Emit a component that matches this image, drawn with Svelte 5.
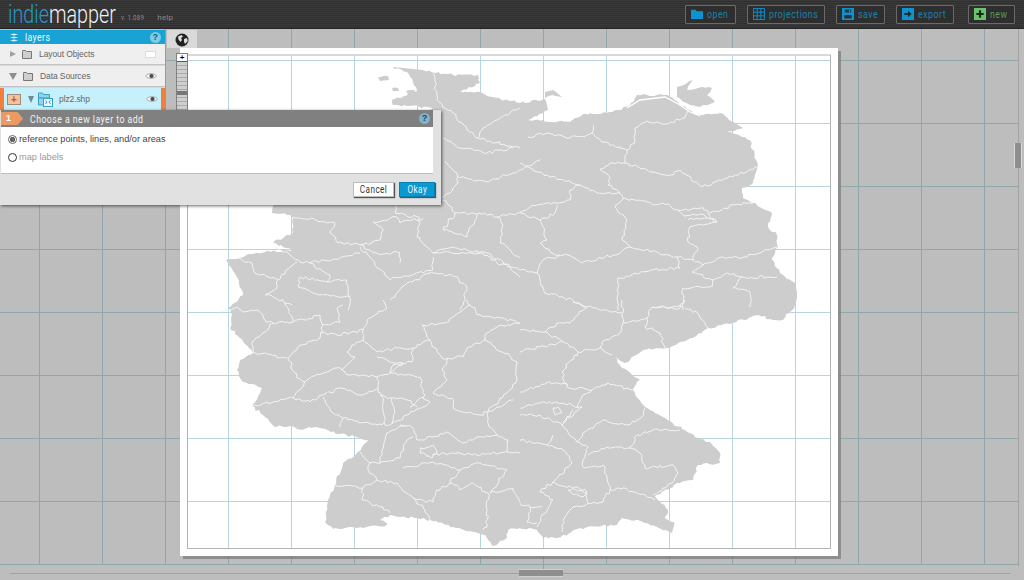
<script>
	const gridX = [39.5, 102.5, 165.5, 228.5, 291.5, 354.5, 417.5, 480.5, 543.5, 606.5, 669.5, 732.5, 795.5, 858.5, 921.5, 984.5];
	const gridY = [60.5, 123.5, 186.5, 249.5, 312.5, 375.5, 438.5, 501.5, 564.5];

	const buttons = [
		{ label: 'open', icon: 'folder', width: 51 },
		{ label: 'projections', icon: 'grid', width: 78 },
		{ label: 'save', icon: 'disk', width: 49 },
		{ label: 'export', icon: 'arrow', width: 58 },
		{ label: 'new', icon: 'plus', width: 47 }
	];

	// germany, traced clockwise from the north frisian coast
	const coast = `393,67 407,72 413,82 417,91 392,100 393,105 410,106 433,108 425,115 300,190 273,206 272,213 290,215 293,218 293,232 273,243 293,250 265,252 226,260 237,277 243,295 228,308 232,315 230,328 240,338 253,353 240,360 237,370 243,382 262,388 252,406 263,415 275,427 292,426 297,429 315,427 340,434 368,440 358,452 343,463 335,485 328,500 325,522 333,529 367,527 390,525 380,520 390,515 400,517 417,518 430,520 453,527 485,535 493,546 507,538 508,530 520,528 537,530 543,538 557,538 580,528 617,525 622,518 643,522 657,527 672,533 674,522 665,518 668,510 655,497 677,483 693,480 698,465 720,463 720,453 710,442 695,437 663,417 645,407 633,390 640,380 622,368 615,357 625,363 643,350 667,348 693,338 708,328 733,323 758,315 773,320 783,320 795,305 797,295 795,283 780,273 772,258 778,247 777,235 768,227 772,213 753,203 743,198 742,188 753,183 758,167 750,140 727,132 743,128 733,122 720,113 700,115 687,109 667,95 637,95 630,105 612,112 582,115 570,122 528,120 548,110 545,99 520,103 492,97 480,92 460,92 480,83 478,75 453,75 423,70`;

	const borders = [
		'528,137 547,133 570,138 592,133 593,125',
		'592,133 602,142 627,150 625,163 653,172 670,175 680,170 702,187 727,178 758,167',
		'627,150 635,140 635,128 647,121 662,124 685,118 688,110',
		'625,163 610,163 600,169 610,177 608,185 620,193',
		'520,163 537,172 550,177 580,185 600,193 620,193',
		'620,193 623,199 640,200 653,205 663,203 678,210 700,208 710,213 733,205 753,203',
		'623,199 615,207 627,220 622,240 630,247 677,257 680,268 653,270 618,278 618,310',
		'630,247 613,255 582,263 568,255 543,260 537,273 545,293 563,297 587,308',
		'580,185 570,190 570,200 557,203 533,205 520,212',
		'557,205 555,213 540,220 547,240 540,243 550,252 560,255',
		'677,257 693,260 698,248 688,242 690,227 717,222 707,213',
		'688,220 707,218 717,222',
		'678,210 684,216 700,214 707,218',
		'693,260 703,265 723,257 747,257 777,247',
		'703,265 692,272 713,280 727,273 742,277 733,288 750,292 750,307',
		'742,277 777,277',
		'713,280 710,287 683,288 683,310',
		'520,270 537,273',
		'433,73 437,100 453,113 467,130 478,138 513,147 520,148',
		'520,108 497,120 483,128 478,138',
		'443,138 460,148 478,150 487,153 513,148',
		'445,162 457,173 458,183 450,193 443,198',
		'458,177 487,182 513,173 520,170 540,160',
		'443,200 447,203 455,213 478,213 497,217 503,225 500,243 520,258',
		'455,213 443,230 467,237 478,213',
		'395,205 395,213 420,218 417,237 433,253 483,253 497,263 520,270',
		'423,218 400,223 397,217 373,222 383,230 380,240 360,245',
		'293,217 330,222 335,223 330,233 338,243 360,245 377,253 400,253 400,263',
		'360,247 370,257 390,280 433,270',
		'275,247 290,255 300,262 310,263 340,258 360,253',
		'237,258 252,263 255,273 278,280 297,262',
		'278,280 277,288 265,295 292,305',
		'310,263 330,275 327,282 300,277 298,287 307,290',
		'327,282 347,280 350,297 348,310',
		'307,290 320,295 350,297',
		'390,300 407,283 433,273 457,277 467,290 460,310',
		'433,270 433,257',
		'520,277 510,267 487,253 453,247 433,253',
		'497,217 520,213 540,220',
		'220,312 237,307 243,312 258,310 265,320 273,323 293,322 288,308 282,300',
		'293,322 320,315 323,325 340,322 337,308 343,305',
		'273,323 263,333 252,342 253,352 287,358',
		'323,325 320,338 300,345 288,358 297,378 305,382',
		'320,333 337,335 363,330 367,320 387,308 383,300',
		'363,330 363,340 377,352 397,348 413,348 430,340 422,325 443,323 453,317 470,305 467,300',
		'363,340 357,342 347,352 355,357 342,370 335,368 307,380 293,398',
		'252,406 293,398 310,402 323,395 340,388 363,395 378,388 377,377 350,375 342,370',
		'377,377 390,372 403,363 393,363 377,357',
		'413,348 412,362 393,365 390,373 420,377 425,395 410,407',
		'430,340 442,358 448,358 442,370 447,380 433,393 452,398 453,408 480,415 488,412 513,400',
		'448,358 463,357 467,348 485,340 517,362 517,380 507,393 488,412',
		'485,340 485,335 497,327 520,323',
		'470,305 480,315 497,317 520,323',
		'488,412 488,423 497,435 477,437 463,443 447,432 433,437 417,440 412,427 400,425',
		'378,388 383,403 385,425 393,423 407,415 423,407 430,402 423,397',
		'340,427 343,418 377,425 385,423',
		'323,397 333,413 343,418',
		'392,398 395,413 392,423',
		'380,395 390,398 407,400 417,407',
		'405,425 387,433 380,463 370,463',
		'360,452 370,463 368,470 377,480 363,488 335,485',
		'377,480 397,483 413,498 433,502 437,490 452,483 460,490 472,483 488,493 487,527 483,530',
		'363,488 362,500 380,507 390,513',
		'413,498 425,510 430,520',
		'380,463 400,458 407,440 413,437',
		'403,468 433,462 447,465 460,470 450,483',
		'420,448 433,445 437,453 432,458 420,453 420,448',
		'432,455 453,453 473,455 507,452 520,453',
		'460,470 480,463 507,470 490,493',
		'507,452 508,440 497,435',
		'490,493 513,488 520,502',
		'520,330 545,332 563,342 578,352 600,348 612,355',
		'545,332 557,323 570,323 587,307 573,302',
		'587,307 622,313 623,323 647,318 652,307 680,308 685,300',
		'623,323 620,333 602,342 600,348',
		'647,318 645,327 660,333 665,348',
		'685,308 698,313 708,328',
		'622,300 623,313',
		'578,352 562,372 567,387 592,390 607,383 633,390',
		'520,352 540,347 563,342',
		'592,390 583,395 577,408 582,407 563,423',
		'520,392 550,382 567,385',
		'520,408 540,403 557,402 563,403 577,407',
		'520,415 540,415 562,425 572,437 577,442 588,447 585,455 583,467 603,465 610,490',
		'562,425 573,410',
		'577,442 585,432 603,420 627,425 642,417 645,408',
		'588,455 607,447 630,448 637,435 653,430 680,430',
		'630,448 640,453 645,468 673,465 678,473 672,483 653,495',
		'610,490 623,488 655,500',
		'610,490 603,502 573,507 565,517 562,532',
		'553,435 547,445 563,450 572,463 553,482 540,492 553,500 537,527',
		'520,440 532,443 547,445',
		'553,482 587,493 588,503',
		'568,490 577,487 587,492 583,497 572,493 568,490',
		'530,507 527,522 537,523',
		'520,503 530,507 542,507',
		'553,408 558,407 562,413 555,415 553,408',
		'653,307 683,307'
	];

	const islands = [
		'677,87 693,80 687,90 702,87 712,88 707,95 715,102 700,107 690,105 677,97',
		'545,92 553,90 562,97 552,95 545,98',
		'378,77 388,76 389,80 380,81',
		'392,88 398,88 399,91 393,91',
		'406,91 414,90 416,93 408,94'
	];

	// coarse traced points get broken up a little so the lines look like real admin borders
	let seed = 7;
	function rand() {
		seed = (seed * 16807) % 2147483647;
		return seed / 2147483647 - 0.5;
	}

	function rough(points, amount, step = 5) {
		const pts = points.split(' ').map((p) => p.split(',').map(Number));
		const out = [pts[0]];
		for (let i = 1; i < pts.length; i++) {
			const [ax, ay] = pts[i - 1];
			const [bx, by] = pts[i];
			const count = Math.max(1, Math.round(Math.hypot(bx - ax, by - ay) / step));
			for (let k = 1; k < count; k++) {
				const t = k / count;
				out.push([ax + (bx - ax) * t + rand() * amount, ay + (by - ay) * t + rand() * amount]);
			}
			out.push(pts[i]);
		}
		return out.map(([x, y]) => `${x.toFixed(1)} ${y.toFixed(1)}`).join(' L');
	}

	const coastPath = 'M' + rough(coast, 2.4, 3) + 'Z';
	const islandPath = islands.map((p) => 'M' + rough(p, 1.5, 4) + 'Z').join(' ');
	const borderPath = borders.map((p) => 'M' + rough(p, 3, 3)).join(' ');
</script>

<div class="app">
	<header class="topbar">
		<div class="logo"><span class="logo-text"><span class="indie">indie</span>mapper</span></div>
		<span class="version">v. 1.089</span>
		<span class="help-link">help</span>
		<nav class="actions">
			{#each buttons as b}
				<button class="action {b.icon}" style:width="{b.width}px">
					<svg class="action-icon" width="12" height="12" viewBox="0 0 13 13">
						{#if b.icon === 'folder'}
							<path d="M0 2h5l1 1.5h7V12H0z" fill="#0f93cf" />
						{:else if b.icon === 'grid'}
							<path d="M.5.5h12v12H.5zM4.5.5v12M8.5.5v12M.5 4.5h12M.5 8.5h12" fill="none" stroke="#0f93cf" />
						{:else if b.icon === 'disk'}
							<path d="M0 0h13v13H0z" fill="#0f93cf" />
							<path d="M3 1.5h7v3.5H3zM2.5 7.5h8v4h-8z" fill="#2f2f2f" />
							<path d="M7.5 2h1.5v2.5H7.5z" fill="#0f93cf" />
						{:else if b.icon === 'arrow'}
							<path d="M0 0h13v13H0z" fill="#0f93cf" />
							<path d="M2.5 5.3h4V3l4 3.5-4 3.5V7.7h-4z" fill="#1d2a30" />
						{:else}
							<path d="M0 0h13v13H0z" fill="#67c46a" />
							<path d="M5.3 2.5h2.4v2.8h2.8v2.4H7.7v2.8H5.3V7.7H2.5V5.3h2.8z" fill="#16281a" />
						{/if}
					</svg>
					<span class="narrow">{b.label}</span>
				</button>
			{/each}
		</nav>
	</header>

	<main class="stage">
		<svg class="canvas" viewBox="0 29 1024 551" width="1024" height="551">
			{#each gridX as x}
				<line x1={x} x2={x} y1="29" y2={x === 543.5 ? 569 : 565} class="grid-out" />
			{/each}
			{#each gridY as y}
				<line x1="0" x2="1018" y1={y} y2={y} class="grid-out" />
			{/each}
			<line x1="10" x2="1011" y1="573.5" y2="573.5" class="track" />
			<line x1="1018.5" x2="1018.5" y1="29" y2="566" class="track" />

			<rect x="183" y="51" width="658" height="508" fill="#7f7f7f" opacity="0.75" />
			<rect x="180" y="48" width="658" height="508" fill="#fff" />
			<rect x="187.5" y="55" width="643" height="493.5" fill="#fff" stroke="#b4b4b4" />
			{#each gridX.filter((x) => x > 187 && x < 830) as x}
				<line x1={x} x2={x} y1="55.5" y2="548" class="grid-in" />
			{/each}
			{#each gridY.filter((y) => y < 548) as y}
				<line x1="188" x2="830" y1={y} y2={y} class="grid-in" />
			{/each}

			<path d={islandPath} fill="#cdcdcd" />
			<path d={coastPath} fill="#cdcdcd" />
			<path d={borderPath} fill="none" stroke="#f4f4f4" stroke-width="1" />
			<path d="M627 108 640 100 665 97 680 105 690 112 700 116" fill="none" stroke="#fff" stroke-width="1.3" />
		</svg>

		<div class="thumb-h"></div>
		<div class="thumb-v"></div>

		<div class="tools">
			<div class="globe-tab">
				<svg width="14" height="14" viewBox="0 0 14 14">
					<circle cx="7" cy="7" r="6.5" fill="#222" />
					<path d="M3 3.5 6.5 2 8 3.5 6 5 7 7 5.5 9 3.5 6.5zM9 6l3-1 .8 3-2.8 3-1-2.5z" fill="#ddd" />
				</svg>
			</div>
			<div class="slider">
				<div class="zoom-plus">+</div>
				<div class="slider-knob"></div>
			</div>
		</div>

		<aside class="layers">
			<div class="layers-head">
				<svg width="10" height="9" viewBox="0 0 10 9">
					<path d="M1 1.5 5 .5l4 1-4 1zM1 4.5l4-1 4 1-4 1zM1 7.5l4-1 4 1-4 1z" fill="#d8f0f8" />
				</svg>
				<span class="narrow">layers</span>
				<i class="qmark">?</i>
			</div>
			<div class="row">
				<b class="tri right"></b>
				<svg class="folder" width="10" height="10" viewBox="0 0 10 10">
					<path d="M.5 2.5V1.5h3l1 1h5v7H.5z" fill="#cfcfcf" stroke="#777" />
				</svg>
				<span class="name">Layout Objects</span>
				<span class="swatch"></span>
			</div>
			<div class="row">
				<b class="tri down"></b>
				<svg class="folder" width="10" height="10" viewBox="0 0 10 10">
					<path d="M.5 2.5V1.5h3l1 1h5v7H.5z" fill="#cfcfcf" stroke="#777" />
				</svg>
				<span class="name">Data Sources</span>
				<svg class="eye" width="12" height="8" viewBox="0 0 12 8">
					<path d="M.5 4C3 .8 9 .8 11.5 4 9 7.2 3 7.2.5 4z" fill="#f4f4f4" stroke="#999" stroke-width=".8" />
					<circle cx="6.5" cy="4" r="2.1" fill="#4a4a4a" />
				</svg>
			</div>
			<div class="row selected">
				<span class="add">+</span>
				<b class="tri down dark"></b>
				<svg class="file" width="15" height="15" viewBox="0 0 15 15">
					<path d="M.5 3V1h4l1 1.5h6V6H.5z" fill="#8fd3ee" stroke="#3a9fca" />
					<path d="M.5 6v7h5V6z" fill="#8fd3ee" stroke="#3a9fca" />
					<rect x="5.5" y="6.5" width="9" height="8" fill="#e6f8fd" stroke="#3a9fca" />
					<path d="M7.5 8.5 9 10l-1.5 2M12.5 8.5 11 10l1.5 2" fill="none" stroke="#3a9fca" />
				</svg>
				<span class="name">plz2.shp</span>
				<svg class="eye" width="12" height="8" viewBox="0 0 12 8">
					<path d="M.5 4C3 .8 9 .8 11.5 4 9 7.2 3 7.2.5 4z" fill="#f4f4f4" stroke="#999" stroke-width=".8" />
					<circle cx="6.5" cy="4" r="2.1" fill="#4a4a4a" />
				</svg>
			</div>
		</aside>

		<section class="dialog">
			<div class="dialog-head">
				<span class="step">1</span>
				<h2><span class="narrow">Choose a new layer to add</span></h2>
				<i class="qmark">?</i>
			</div>
			<div class="dialog-body">
				<label class="option"><span class="radio on"></span>reference points, lines, and/or areas</label>
				<label class="option off"><span class="radio"></span>map labels</label>
			</div>
			<div class="dialog-foot">
				<button class="btn"><span class="squeeze">Cancel</span></button>
				<button class="btn primary"><span class="squeeze">Okay</span></button>
			</div>
		</section>
	</main>
</div>

<style>
	:global(body) {
		background: #bdbdbd;
		overflow: hidden;
	}
	.app {
		width: 1024px;
		height: 580px;
		display: flex;
		flex-direction: column;
		font-family: "Liberation Sans", Arial, sans-serif;
		overflow: hidden;
	}
	/* the original uses a din-like condensed face, roboto squeezed is the nearest we have */
	.narrow {
		display: inline-block;
		white-space: nowrap;
		transform: scaleX(0.76);
		transform-origin: left;
	}
	.squeeze {
		display: inline-block;
		transform: scaleX(0.74);
	}
	.topbar {
		height: 29px;
		flex: none;
		display: flex;
		align-items: center;
		box-sizing: border-box;
		padding-left: 8px;
		background: repeating-linear-gradient(#3a3a3a 0 1px, #2f2f2f 1px 2px);
		border-bottom: 1px solid #262626;
		font-family: Roboto, sans-serif;
	}
	.logo {
		width: 108px;
		white-space: nowrap;
		font-family: Roboto, sans-serif;
		font-weight: 300;
		font-size: 26px;
		line-height: 29px;
		color: #f2f2f2;
	}
	.logo-text {
		display: inline-block;
		transform: scaleX(0.76);
		transform-origin: left;
	}
	.indie {
		color: #1c9ad0;
	}
	.version {
		margin: 6px 0 0 5px;
		font-size: 7.5px;
		letter-spacing: 0.3px;
		color: #8a8a8a;
		transform: scaleX(0.82);
		transform-origin: left;
	}
	.help-link {
		margin: 6px 0 0 8px;
		font-size: 8px;
		letter-spacing: 0.2px;
		color: #8a8a8a;
	}
	.actions {
		margin-left: auto;
		margin-right: 9px;
		display: flex;
		gap: 11px;
	}
	.action {
		height: 19px;
		box-sizing: border-box;
		display: flex;
		align-items: center;
		gap: 4px;
		padding: 0 0 0 5px;
		background: #2e2e2e;
		border: 1px solid #6a6a6a;
		border-radius: 1px;
		font: 400 11.5px Roboto, sans-serif;
		letter-spacing: 0.7px;
		color: #1a82ad;
	}
	.action-icon {
		flex: none;
	}
	.action.plus {
		margin-left: 3px;
		color: #5c9a58;
	}
	.stage {
		position: relative;
		flex: 1;
		background: #bdbdbd;
	}
	.canvas {
		position: absolute;
		inset: 0;
		display: block;
	}
	.grid-out {
		stroke: #8fa6aa;
		stroke-width: 1;
	}
	.grid-in {
		stroke: #b6d5df;
		stroke-width: 1;
	}
	.track {
		stroke: #a2a2a2;
		stroke-width: 1;
	}
	.thumb-h {
		position: absolute;
		left: 519px;
		top: 540px;
		width: 44px;
		height: 8px;
		background: #8e8e8e;
		border-top: 1px solid #d0d0d0;
		border-bottom: 1px solid #d0d0d0;
		box-sizing: border-box;
	}
	.thumb-v {
		position: absolute;
		left: 1014px;
		top: 114px;
		width: 8px;
		height: 25px;
		background: #8e8e8e;
		border-left: 1px solid #d8d8d8;
		border-right: 1px solid #d8d8d8;
		box-sizing: border-box;
	}
	.tools {
		position: absolute;
		left: 167px;
		top: 1px;
		width: 30px;
		display: flex;
		flex-direction: column;
	}
	.globe-tab {
		height: 18px;
		box-sizing: border-box;
		background: #d9d9d9;
		padding: 3px 0 0 8px;
	}
	.slider {
		position: relative;
		margin: 5px 0 0 9px;
		width: 12px;
		height: 60px;
		box-sizing: border-box;
		border: 1px solid #808080;
		background: repeating-linear-gradient(#cfcfcf 0 3px, #a9a9a9 3px 4px);
	}
	.zoom-plus {
		height: 7px;
		background: #fff;
		border-bottom: 1px solid #555;
		font: 700 8px/7px "Liberation Sans", sans-serif;
		text-align: center;
		color: #000;
	}
	.slider-knob {
		position: absolute;
		left: 0;
		right: 0;
		top: 37px;
		height: 4px;
		background: #777;
	}
	.layers {
		position: absolute;
		left: 0;
		top: 1px;
		width: 166px;
		height: 82px;
		background: #d8d8d8;
		border-right: 1px solid #9a9a9a;
		box-sizing: border-box;
		font-size: 8.5px;
		color: #666;
	}
	.layers-head {
		height: 14px;
		background: #19a2d4;
		display: flex;
		align-items: center;
		gap: 6px;
		padding: 0 4px 0 9px;
		font: 400 11.5px Roboto, sans-serif;
		letter-spacing: 0.5px;
		color: #eef9fd;
	}
	.layers-head .qmark {
		margin-left: auto;
		background: #7ecbe6;
		color: #1b5c78;
	}
	.qmark {
		width: 11px;
		height: 11px;
		border-radius: 50%;
		font: 700 9px/11px "Liberation Sans", sans-serif;
		text-align: center;
	}
	.row {
		height: 21px;
		margin-bottom: 1px;
		display: flex;
		align-items: center;
		box-sizing: border-box;
		padding: 0 8px 0 10px;
		background: #efefef;
		border-bottom: 1px solid #c4c4c4;
		position: relative;
	}
	.tri {
		width: 0;
		height: 0;
		flex: none;
	}
	.tri.right {
		border-top: 3.5px solid transparent;
		border-bottom: 3.5px solid transparent;
		border-left: 6px solid #a0a0a0;
	}
	.tri.down {
		margin-left: -1px;
		border-left: 4px solid transparent;
		border-right: 4px solid transparent;
		border-top: 7px solid #8e8e8e;
	}
	.tri.dark {
		margin-left: 7px;
		border-left-width: 3.5px;
		border-right-width: 3.5px;
		border-top-color: #6f8b92;
	}
	.folder {
		margin-left: 6px;
	}
	.name {
		margin-left: 7px;
		letter-spacing: -0.1px;
	}
	.swatch {
		margin-left: auto;
		margin-right: 1px;
		width: 11px;
		height: 7px;
		background: #fff;
		border: 1px solid #dcdcdc;
		box-sizing: border-box;
	}
	.eye {
		margin-left: auto;
	}
	.selected {
		height: 22px;
		padding: 0 3px 0 3px;
		margin-bottom: 0;
		background: #c6f1fc;
		border-left: 4px solid #ef7f3a;
		border-right: 4px solid #ef7f3a;
		border-bottom: none;
	}
	.add {
		width: 14px;
		height: 11px;
		box-sizing: border-box;
		background: #f3c39c;
		border: 1px solid #a08a78;
		font: 700 10px/9px "Liberation Sans", sans-serif;
		text-align: center;
		color: #c25a1c;
	}
	.file {
		margin-left: 4px;
	}
	.selected .name {
		margin-left: 6px;
	}
	.dialog {
		position: absolute;
		left: 0;
		top: 81px;
		width: 441px;
		height: 95px;
		background: #e1e1e1;
		box-shadow: 1px 1px 3px rgba(0, 0, 0, 0.6);
		display: flex;
		flex-direction: column;
		padding-left: 1px;
		box-sizing: border-box;
	}
	.dialog-head {
		height: 17px;
		width: 432px;
		background: #808080;
		display: flex;
		align-items: center;
		color: #f4f4f4;
	}
	.step {
		width: 22px;
		height: 13px;
		background: #ec9a62;
		clip-path: polygon(0 0, 75% 0, 100% 50%, 75% 100%, 0 100%);
		font: 700 9px/12px "Liberation Sans", sans-serif;
		padding-left: 5px;
		box-sizing: border-box;
		color: #fff;
	}
	h2 {
		margin: 0 0 0 7px;
		font: 400 11.5px Roboto, sans-serif;
		letter-spacing: 0.6px;
	}
	.dialog-head .qmark {
		margin-left: auto;
		margin-right: 3px;
		background: #7fb4ca;
		color: #24465a;
	}
	.dialog-body {
		width: 432px;
		height: 47px;
		box-sizing: border-box;
		background: #fff;
		border-bottom: 1px solid #bdbdbd;
		padding: 5px 0 0 7px;
		display: flex;
		flex-direction: column;
		gap: 4px;
	}
	.option {
		height: 14px;
		display: flex;
		align-items: center;
		gap: 2px;
		font-size: 9.2px;
		color: #444;
	}
	.option.off {
		color: #999;
	}
	.radio {
		width: 9px;
		height: 9px;
		box-sizing: border-box;
		border-radius: 50%;
		border: 1px solid #333;
		background: #fff;
	}
	.radio.on {
		border-color: #666;
		background: radial-gradient(circle, #666 0 2.5px, #fff 3px);
	}
	.dialog-foot {
		flex: 1;
		display: flex;
		justify-content: flex-end;
		align-items: flex-start;
		gap: 5px;
		padding: 8px 6px 0 0;
	}
	.btn {
		height: 15px;
		width: 41px;
		padding: 0;
		box-sizing: border-box;
		background: #fff;
		border: 1px solid #bbb;
		box-shadow: 1px 1px 1px #555;
		font: 400 11px/13px Roboto, sans-serif;
		letter-spacing: 0.6px;
		color: #333;
	}
	.btn.primary {
		width: 36px;
		background: #0a99d0;
		border-color: #0a7fae;
		color: #e8f8ff;
	}
</style>
